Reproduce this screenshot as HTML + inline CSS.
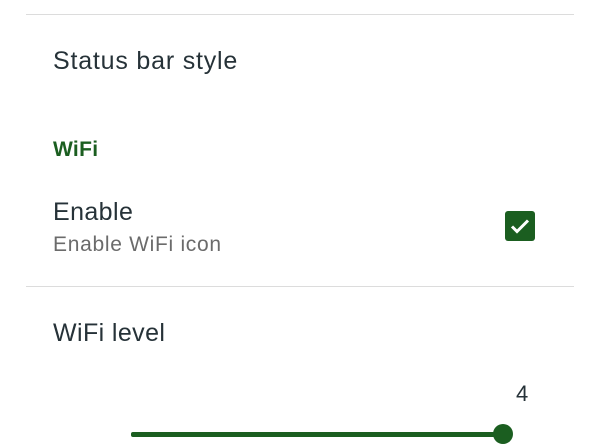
<!DOCTYPE html>
<html><head><style>
body{margin:0;width:600px;height:445px;background:#fff;font-family:"Liberation Sans",Roboto,sans-serif;position:relative;overflow:hidden}
.t{position:absolute;white-space:nowrap}
.hr{position:absolute;left:26px;width:548px;height:1px;background:#dcdcdc}
</style></head><body>
<div class="hr" style="top:14px"></div>
<div class="t" style="left:53px;top:47px;font-size:25px;letter-spacing:0.8px;color:#263238">Status bar style</div>
<div class="t" style="left:53px;top:138px;font-size:21px;letter-spacing:0.3px;color:#1b5e20;font-weight:bold">WiFi</div>
<div class="t" style="left:53px;top:198px;font-size:25px;letter-spacing:0.4px;color:#263238">Enable</div>
<div class="t" style="left:53px;top:233px;font-size:21px;letter-spacing:0.7px;color:#6b6b6b">Enable WiFi icon</div>
<div style="position:absolute;left:505px;top:211px;width:30px;height:30px;background:#1b5e20;border-radius:3px">
<svg width="30" height="30" viewBox="0 0 30 30"><path d="M7 15.5l5 5 11-11" stroke="#fff" stroke-width="3" fill="none"/></svg></div>
<div class="hr" style="top:286px"></div>
<div class="t" style="left:53px;top:319px;font-size:25px;letter-spacing:0.4px;color:#263238">WiFi level</div>
<div class="t" style="left:516px;top:381px;font-size:22px;color:#263238">4</div>
<div style="position:absolute;left:131px;top:432px;width:372px;height:5px;background:#1b5e20;border-radius:2px"></div>
<div style="position:absolute;left:493px;top:424px;width:20px;height:20px;background:#1b5e20;border-radius:50%"></div>
</body></html>
